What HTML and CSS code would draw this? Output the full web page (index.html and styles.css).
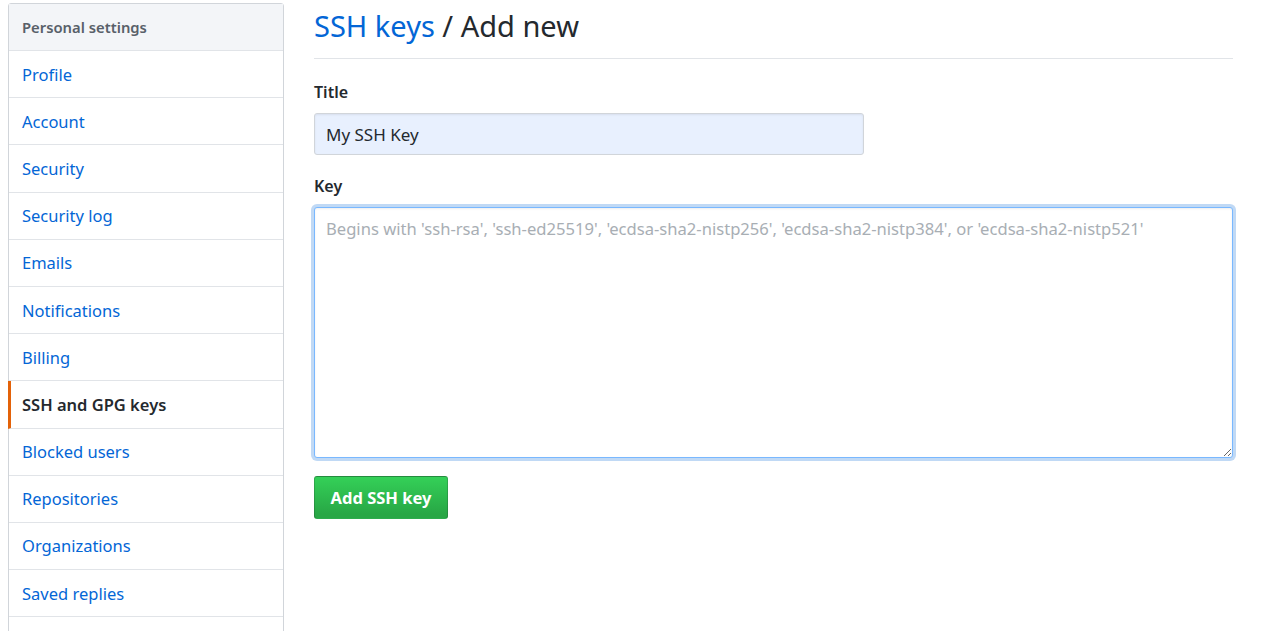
FILE: index.html
```html
<!DOCTYPE html>
<html>
<head>
<meta charset="utf-8">
<link rel="stylesheet" href="styles.css">
</head>
<body>
<div class="page">
  <nav class="menu">
    <div class="menu-heading">Personal settings</div>
    <a class="menu-item" href="#">Profile</a>
    <a class="menu-item" href="#">Account</a>
    <a class="menu-item" href="#">Security</a>
    <a class="menu-item" href="#">Security log</a>
    <a class="menu-item" href="#">Emails</a>
    <a class="menu-item" href="#">Notifications</a>
    <a class="menu-item" href="#">Billing</a>
    <a class="menu-item selected" href="#">SSH and GPG keys</a>
    <a class="menu-item" href="#">Blocked users</a>
    <a class="menu-item" href="#">Repositories</a>
    <a class="menu-item" href="#">Organizations</a>
    <a class="menu-item" href="#">Saved replies</a>
    <a class="menu-item menu-item-last" href="#"></a>
  </nav>
  <main class="main">
    <div class="subhead">
      <h2 class="subhead-title"><a href="#">SSH keys</a> / Add new</h2>
    </div>
    <form class="form">
      <div class="form-group">
        <label class="label">Title</label>
        <input class="input input-title" type="text" value="My SSH Key">
      </div>
      <div class="form-group">
        <label class="label">Key</label>
        <textarea class="input textarea" placeholder="Begins with 'ssh-rsa', 'ssh-ed25519', 'ecdsa-sha2-nistp256', 'ecdsa-sha2-nistp384', or 'ecdsa-sha2-nistp521'"></textarea>
      </div>
      <button class="btn" type="button">Add SSH key</button>
    </form>
  </main>
</div>
</body>
</html>
```

FILE: styles.css
```css
* { box-sizing: border-box; }
html, body { margin: 0; padding: 0; background: #fff; }
body {
  font-family: "Noto Sans", "Open Sans", "Liberation Sans", sans-serif;
  color: #24292e;
  overflow: hidden;
  height: 631px;
}
.page {
  display: flex;
  gap: 30px;
  padding: 3px 0 0 8px;
}
.menu {
  width: 276px;
  flex: none;
  border: 1px solid #d1d5da;
  border-radius: 3px 3px 0 0;
  display: flex;
  flex-direction: column;
}
.menu-heading {
  height: 47px;
  background: #f3f5f8;
  border-bottom: 1px solid #e1e4e8;
  padding: 0 13px;
  display: flex;
  align-items: center;
  font-size: 14.8px;
  font-weight: 600;
  color: #586069;
}
.menu-item {
  height: 47.2px;
  flex: none;
  padding: 0 13px;
  display: flex;
  align-items: center;
  border-bottom: 1px solid #e1e4e8;
  font-size: 16.5px;
  color: #0366d6;
  text-decoration: none;
}
.menu-item.selected {
  color: #24292e;
  font-weight: 600;
  border-left: 3px solid #e36209;
  padding-left: 11px;
  margin-left: -1px;
}
.main {
  width: 919px;
  flex: none;
}
.subhead {
  height: 56px;
  border-bottom: 1px solid #e1e4e8;
  display: flex;
  align-items: center;
}
.subhead-title {
  margin: 0;
  font-size: 29px;
  font-weight: 400;
  color: #24292e;
  position: relative;
  top: -5px;
}
.subhead-title a { color: #0366d6; text-decoration: none; }
.form { padding-top: 22px; }
.form-group { display: flex; flex-direction: column; }
.label {
  font-size: 16px;
  font-weight: 600;
  height: 32px;
  line-height: 22px;
}
.input {
  font-family: inherit;
  font-size: 17px;
  color: #24292e;
  border: 1px solid #d1d5da;
  border-radius: 3px;
  padding: 0 11px;
  outline: none;
}
.input-title {
  width: 550px;
  height: 42px;
  background: #e8f0fe;
  box-shadow: inset 0 1px 2px rgba(27,31,35,.075);
  margin-bottom: 20px;
}
.textarea {
  width: 919px;
  height: 251px;
  padding: 9px 11px;
  font-size: 16.6px;
  border-color: #79b8ff;
  box-shadow: inset 0 1px 2px rgba(27,31,35,.075), 0 0 0 3px rgba(3,102,214,.25);
  resize: vertical;
  margin-bottom: 18px;
}
.textarea::placeholder { color: #a8aeb4; }
.btn {
  width: 134px;
  height: 43px;
  font-family: inherit;
  font-size: 16.5px;
  font-weight: 700;
  color: #fff;
  background: linear-gradient(-180deg, #34d058 0%, #28a745 90%);
  border: 1px solid rgba(27,31,35,.2);
  border-radius: 3px;
  padding: 0;
}
```
